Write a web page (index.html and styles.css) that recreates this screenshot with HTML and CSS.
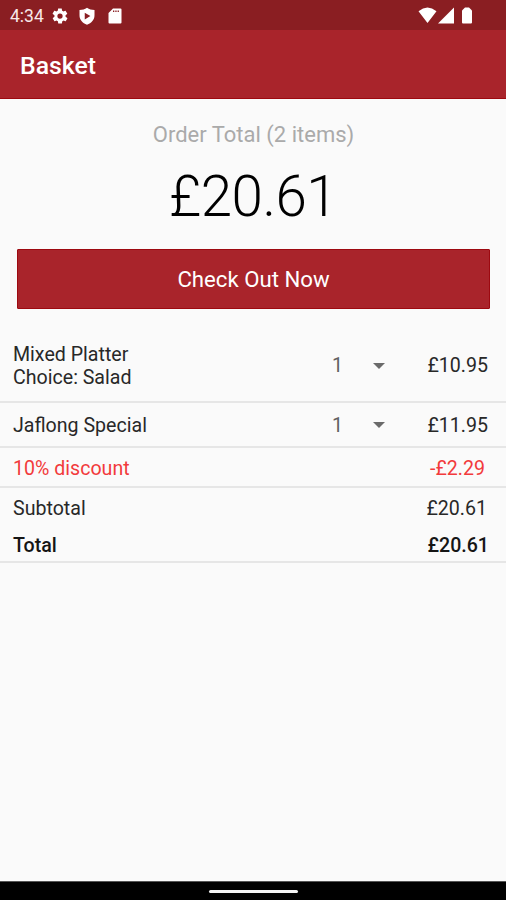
FILE: index.html
```html
<!DOCTYPE html>
<html lang="en">
<head>
<meta charset="utf-8">
<title>Basket</title>
<link rel="stylesheet" href="styles.css">
</head>
<body>
<div class="status">
  <span class="clock">4:34</span>
  <svg class="gear" width="18" height="18" viewBox="0 0 24 24"><path fill-rule="evenodd" d="M19.4 13c.1-.7.1-1.300 0-2l2.100-1.600c.2-.2.2-.4.1-.6l-2-3.500c-.1-.2-.4-.3-.6-.2l-2.500 1c-.5-.4-1.100-.7-1.700-1l-.4-2.600c0-.3-.2-.5-.5-.5h-4c-.3 0-.5.2-.5.500l-.4 2.600c-.6.2-1.200.6-1.700 1l-2.500-1c-.2-.1-.5 0-.6.2l-2 3.500c-.1.2-.1.500.1.600L4.600 11c-.1.700-.1 1.300 0 2l-2.100 1.600c-.2.2-.2.400-.1.600l2 3.500c.1.200.4.300.6.200l2.500-1c.5.400 1.100.7 1.700 1l.4 2.600c0 .3.200.500.500.500h4c.3 0 .5-.2.500-.5l.4-2.600c.6-.2 1.200-.6 1.700-1l2.500 1c.2.100.500 0 .6-.2l2-3.500c.1-.2.100-.5-.1-.6zM12 15.500a3.500 3.500 0 1 1 0-7 3.500 3.500 0 0 1 0 7z"/></svg>
  <svg class="shield" width="18" height="18" viewBox="0 0 24 24"><path fill-rule="evenodd" d="M12 1C9 3 6 4 2 4v7c0 6 4 10.500 10 12.500 6-2 10-6.500 10-12.500V4c-4 0-7-1-10-3zM9 7.500 16.500 12l-7.500 4.500z"/></svg>
  <svg class="card" width="14" height="16" viewBox="0 0 14 16"><path fill-rule="evenodd" d="M5 .5h7.500q1 0 1 1v13q0 1-1 1h-11q-1 0-1-1V5zM5 2.500v1.500h1.300v-1.500zm2.300 0v1.500h1.300v-1.500zm2.300 0v1.500h1.300v-1.500z"/></svg>
  <svg class="signals" width="56" height="18" viewBox="0 0 56 18"><path d="M.5 4.200Q9.500-3 18.500 4.200L9.500 16zM20 16.500 36 .500v16zM44 4q0-1 1-1.500l2-2h4l2 2q1 .5 1 1.500v11.500q0 1-1 1h-8q-1 0-1-1z"/></svg>
</div>
<header class="bar"><h1>Basket</h1></header>
<main>
  <p class="caption">Order Total (2 items)</p>
  <p class="amount">£20.61</p>
  <button class="checkout">Check Out Now</button>
  <section class="rows">
    <div class="row item tall"><span>Mixed Platter<br>Choice: Salad</span><span class="qty">1</span><svg class="arrow" width="12" height="6" viewBox="0 0 12 6"><path d="M0 0h12L6 6z"/></svg><span class="price">£10.95</span></div>
    <div class="row item"><span>Jaflong Special</span><span class="qty">1</span><svg class="arrow" width="12" height="6" viewBox="0 0 12 6"><path d="M0 0h12L6 6z"/></svg><span class="price">£11.95</span></div>
    <div class="row discount"><span>10% discount</span><span class="price">-£2.29</span></div>
    <div class="row subtotal"><span>Subtotal</span><span class="price">£20.61</span></div>
    <div class="row total"><span>Total</span><span class="price">£20.61</span></div>
  </section>
</main>
<footer class="nav"><span class="pill"></span></footer>
</body>
</html>
```
FILE: styles.css
```css
* { box-sizing: border-box; margin: 0; }
body { height: 900px; display: flex; flex-direction: column; background: #fafafa; color: #282828; font-family: Roboto, "Liberation Sans", sans-serif; font-size: 19.6px; overflow: hidden; }
.status { height: 30px; flex: none; display: flex; align-items: center; background: #8a1e22; padding: 1px 32px 0 10px; color: #fff; fill: #fff; }
.clock { width: 41px; font-size: 17.5px; color: #f8e8e8; }
.shield { margin-left: 9px; }
.card { margin-left: 12px; }
.signals { margin-left: auto; }
.bar { height: 69px; flex: none; display: flex; align-items: center; padding: 3px 20px 0; background: #a9242b; border-bottom: 1px solid #9d0910; color: #fff; }
h1 { font-size: 24.8px; font-weight: 500; }
main { flex: 1; }
.caption { margin-top: 22px; line-height: 28px; padding-left: 1px; text-align: center; font-size: 22px; color: #aaa; }
.amount { margin-top: 13px; line-height: 70px; text-align: center; font-size: 56.5px; font-weight: 300; letter-spacing: -0.5px; color: #000; }
.checkout { display: block; width: 473px; height: 60px; margin: 17px 0 0 17px; padding-top: 1px; border: 1px solid #9d0910; border-radius: 1px; background: #a9242b; color: #fff; font: 400 22.2px Roboto, sans-serif; }
.rows { margin-top: 19px; }
.row { display: flex; align-items: center; justify-content: space-between; padding: 0 18px 0 13px; line-height: 23px; border-bottom: 2px solid #e6e6e6; }
.item { display: grid; grid-template-columns: 319px 41px 12px 1fr; height: 45px; padding-top: 1px; }
.tall { height: 75px; padding-top: 2px; }
.qty { color: #606060; }
.arrow { fill: #6a6a6a; }
.price { text-align: right; }
.discount { height: 40px; padding-top: 2px; color: #f23a3c; padding-right: 21px; }
.subtotal { height: 40px; padding-top: 1px; border: 0; padding-right: 19px; }
.total { height: 35px; padding-top: 1px; padding-right: 17px; font-weight: 500; color: #151515; }
.nav { height: 19px; flex: none; display: flex; align-items: center; justify-content: center; background: #000; border-top: 1px solid #555; }
.pill { width: 89px; height: 3px; margin-top: 1px; border-radius: 2px; background: #f4f4f4; }
```
